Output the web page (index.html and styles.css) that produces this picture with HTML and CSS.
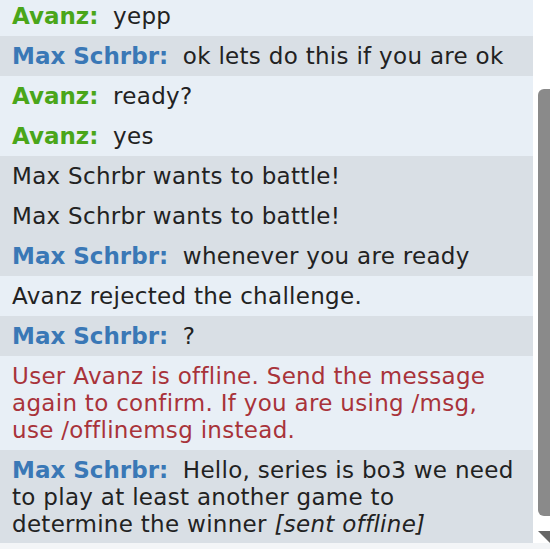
FILE: index.html
```html
<!DOCTYPE html>
<html>
<head>
<meta charset="utf-8">
<link rel="stylesheet" href="styles.css">
</head>
<body>
<div class="frame">
  <div class="log">
    <div class="row"><strong class="name green">Avanz:</strong> <span>yepp</span></div>
    <div class="row alt"><strong class="name blue">Max Schrbr:</strong> <span>ok lets do this if you are ok</span></div>
    <div class="row"><strong class="name green">Avanz:</strong> <span>ready?</span></div>
    <div class="row"><strong class="name green">Avanz:</strong> <span>yes</span></div>
    <div class="row alt">Max Schrbr wants to battle!</div>
    <div class="row alt">Max Schrbr wants to battle!</div>
    <div class="row alt"><strong class="name blue">Max Schrbr:</strong> <span>whenever you are ready</span></div>
    <div class="row">Avanz rejected the challenge.</div>
    <div class="row alt"><strong class="name blue">Max Schrbr:</strong> <span>?</span></div>
    <div class="row error">User Avanz is offline. Send the message again to confirm. If you are using /msg, use /offlinemsg instead.</div>
    <div class="row alt"><strong class="name blue">Max Schrbr:</strong> <span>Hello, series is bo3 we need to play at least another game to determine the winner <i>[sent offline]</i></span></div>
  </div>
  <div class="scrollbar">
    <div class="thumb"></div>
    <div class="arrow"></div>
  </div>
</div>
</body>
</html>
```
FILE: styles.css
```css
html, body {
  margin: 0;
  padding: 0;
}
body {
  width: 550px;
  height: 549px;
  overflow: hidden;
  background: #f3f5f7;
  font-family: "DejaVu Sans", Verdana, sans-serif;
  font-size: 23px;
  color: #222;
}
.frame {
  display: flex;
  height: 543px;
  overflow: hidden;
}
.log {
  width: 533px;
  flex: none;
  background: #e8eff6;
  margin-top: -4px;
}
.row {
  padding: 6.5px 16px 6.5px 12px;
  line-height: 27px;
  letter-spacing: 0.3px;
}
.row.alt {
  background: #d9dfe5;
}
.name {
  margin-right: 7px;
  letter-spacing: 0;
}
.green { color: #4aa61a; }
.blue { color: #3a78b6; }
.error { color: #a8333a; }
.scrollbar {
  flex: 1;
  background: #fff;
  display: flex;
  flex-direction: column;
  padding-left: 5px;
}
.thumb {
  margin-top: 89px;
  height: 431px;
  background: #8a8a8a;
  border-radius: 6px 0 0 6px;
}
.arrow {
  margin-top: 15px;
  width: 0;
  height: 0;
  border-left: 12px solid transparent;
  border-top: 12px solid #666;
}
```
